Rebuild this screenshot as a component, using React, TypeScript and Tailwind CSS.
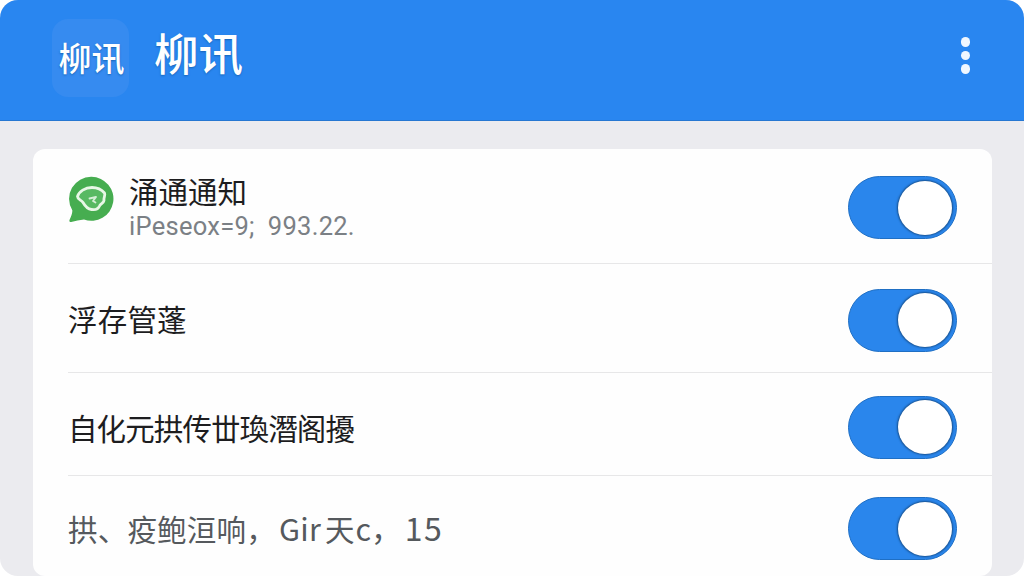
import type { ReactNode } from 'react';

function Toggle() {
  return (
    <button
      type="button"
      role="switch"
      aria-checked="true"
      className="flex h-[63px] w-[109px] shrink-0 items-center justify-end rounded-full border border-[#1f6fc4] bg-[#2a86ec] pr-1"
    >
      <span className="size-[54px] rounded-full bg-white shadow-[0_0_2px_1px_#174f8c]" />
    </button>
  );
}

function Row({ className, children }: { className: string; children: ReactNode }) {
  return <div className={`flex justify-between pr-[35px] ${className}`}>{children}</div>;
}

function ChatIcon() {
  return (
    <svg width="46" height="47" viewBox="0 0 46 47" className="shrink-0">
      <path d="M23.500.8a22 22 0 1 1-7.500 42.700C11.500 43.800 7.500 45.300 3.200 45.900 1.600 46.100 1 45 1.600 43.700 2.800 41 4.600 37.500 4.300 34.300A22 22 0 0 1 23.500.8Z" fill="#46ad50" />
      <path d="M9.500 20.500C11 15.500 17 11.500 24 11.500c5.500 0 10 2.500 12.500 5.500 1.200 2-1 4-.5 7.500-.5 3-3.500 3-4.500 5.500-1.500 3.500-5 4-8 3.500-4-.5-6.500-3.500-8.500-7-1.500-2.500-5.500-3-5.500-6Z" fill="#58b962" stroke="#e8f7e6" strokeWidth="2.800" strokeLinejoin="round" />
      <path d="M21.500 22.500 28 21l-3 4 2.500 1.500" fill="none" stroke="#d5efd6" strokeWidth="1.800" strokeLinecap="round" strokeLinejoin="round" />
    </svg>
  );
}

export default function App() {
  return (
    <div className="h-[576px] w-[1024px] overflow-hidden bg-white font-['Roboto','Noto_Sans_CJK_SC',sans-serif]">
      <div className="flex h-full flex-col overflow-hidden rounded-[18px] bg-[#ebebef]">
        <header className="flex h-[121px] shrink-0 items-start border-b border-[#2677d2] bg-[#2986f0] pl-[52px] text-white">
          <div className="mt-[19px] flex h-[78px] w-[77px] items-center justify-center rounded-[16px] bg-[#368bf0]">
            <span className="whitespace-nowrap pb-[3px] pl-[2px] font-['Noto_Sans_CJK_SC',sans-serif] text-[33px] leading-[40px] font-medium [text-shadow:0_1px_2px_#1765b8]">柳讯</span>
          </div>
          <h1 className="mt-[22px] ml-[25px] font-['Noto_Sans_CJK_SC',sans-serif] text-[44.500px] leading-[60px] font-medium [text-shadow:0_1px_2px_#1765b8]">柳讯</h1>
          <button type="button" aria-label="菜单" className="mt-[37px] mr-[54px] ml-auto flex flex-col gap-[4px]">
            <span className="size-[9.500px] rounded-full bg-[#f0f7ff]" />
            <span className="size-[9.500px] rounded-full bg-[#f0f7ff]" />
            <span className="size-[9.500px] rounded-full bg-[#f0f7ff]" />
          </button>
        </header>
        <main className="mt-[28px] mr-[32px] ml-[33px] h-[427px] shrink-0 divide-y divide-[#e7e7e8] rounded-[12px] bg-[#fefefe] pl-[35px] font-['Noto_Sans_CJK_SC',sans-serif] text-[29.500px] text-[#1d1d1f]">
          <Row className="h-[115px] pt-[27px]">
            <div className="flex">
              <ChatIcon />
              <div className="ml-[15px]">
                <div className="-mt-[3px] leading-[34px]">涌通通知</div>
                <div className="mt-[4px] font-['Roboto',sans-serif] text-[25.500px] leading-[30px] tracking-[0.270px] whitespace-pre text-[#7b8085]">iPeseox=9;  993.22.</div>
              </div>
            </div>
            <Toggle />
          </Row>
          <Row className="h-[109px] items-center pt-[4px]">
            <span className="pb-[4px] leading-[40px] tracking-[0.200px]">浮存管蓬</span>
            <Toggle />
          </Row>
          <Row className="h-[103px] items-center pt-[6px]">
            <span className="leading-[40px] tracking-[-0.900px]">自化元拱传丗瑍潛阁擾</span>
            <Toggle />
          </Row>
          <Row className="h-[100px] items-center pt-[5px] text-[#55595d]">
            <span className="pb-[3px] leading-[40px] whitespace-pre">
              <span className="tracking-[0.200px]">拱、疫鲍洹响，</span>
              <span className="ml-[3px] text-[30.500px] tracking-[0.300px]">Gir</span>
              <span className="ml-[4px]">天</span>
              <span className="ml-px text-[30.500px]">c，</span>
              <span className="ml-[3px] text-[32px] tracking-[1.500px]">15</span>
            </span>
            <Toggle />
          </Row>
        </main>
      </div>
    </div>
  );
}
